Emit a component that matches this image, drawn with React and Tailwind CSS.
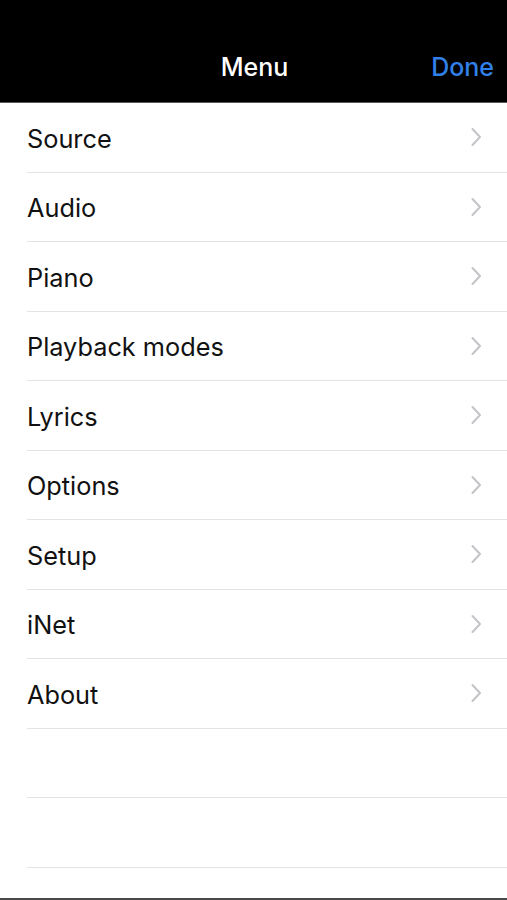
const items = ["Source", "Audio", "Piano", "Playback modes", "Lyrics", "Options", "Setup", "iNet", "About"]

function Chevron() {
    return (
        <svg width="12" height="20" viewBox="0 0 12 20" className="shrink-0">
            <path d="M2.5 2 L10 10 L2.5 18" fill="none" stroke="#c4c4c8" strokeWidth="2" strokeLinecap="round" strokeLinejoin="round" />
        </svg>
    )
}

export default function App() {
    return (
        <div className="w-[507px] h-[900px] bg-white flex flex-col overflow-hidden" style={{ fontFamily: "Inter, 'Liberation Sans', sans-serif" }}>
            <header className="h-[103px] bg-black border-b border-[#5a5a5a] flex items-end pb-[22px] relative shrink-0">
                <div className="flex-1 text-center text-white text-[25px] font-medium leading-none pl-[2px]">Menu</div>
                <div className="absolute right-[13px] bottom-[22px] text-[#3180ea] text-[25px] font-medium leading-none">Done</div>
            </header>
            <main className="flex flex-col pl-[27px]">
                {items.map((item) => (
                    <div key={item} className="h-[69.5px] flex items-center justify-between pr-[25px] border-b border-[#e3e3e6] shrink-0">
                        <span className="text-[25.3px] text-[#111] leading-none pt-[2px]">{item}</span>
                        <Chevron />
                    </div>
                ))}
                <div className="h-[69.5px] border-b border-[#e3e3e6] shrink-0"></div>
                <div className="h-[69.5px] border-b border-[#e3e3e6] shrink-0"></div>
            </main>
            <div className="flex-1"></div>
            <div className="h-[2px] bg-[#4a4a4a] shrink-0"></div>
        </div>
    )
}
